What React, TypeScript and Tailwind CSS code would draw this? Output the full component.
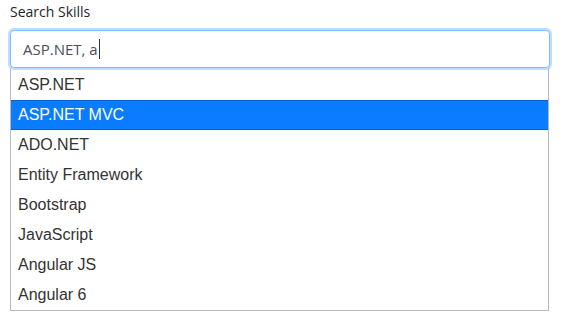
import { useState } from "react";

const SKILLS = [
  "ASP.NET",
  "ASP.NET MVC",
  "ADO.NET",
  "Entity Framework",
  "Bootstrap",
  "JavaScript",
  "Angular JS",
  "Angular 6",
];

export default function App() {
  const [active, setActive] = useState(1);

  return (
    <div className="h-[319px] w-[568px] bg-white pl-[10px] pt-[1px]">
      <label className="block text-[14px] leading-[21px] text-[#212529] font-['Open_Sans',sans-serif]">
        Search Skills
      </label>
      <div className="mt-[8px] w-[540px]">
        <div className="flex h-[38px] items-center rounded-[4px] border border-[#80bdff] bg-white pl-[12px] shadow-[0_0_0_2px_rgba(0,123,255,0.25)]">
          <span className="text-[15px] text-[#495057] font-['Open_Sans',sans-serif]">
            ASP.NET, a
          </span>
          <span className="ml-[1px] h-[20px] w-px bg-[#333]" />
        </div>
        <ul className="w-[539px] border border-t-0 border-[#b9b9b9] pt-[2px] font-['Liberation_Sans',Arial,sans-serif] text-[16px]">
          {SKILLS.map((skill, i) => (
            <li
              key={skill}
              onMouseEnter={() => setActive(i)}
              className={
                i === active
                  ? "flex h-[30px] items-center border-y border-[#0b5ed0] bg-[#0a7cff] pl-[7px] text-white"
                  : "flex h-[30px] items-center pl-[7px] text-[#333]"
              }
            >
              {skill}
            </li>
          ))}
        </ul>
      </div>
    </div>
  );
}
